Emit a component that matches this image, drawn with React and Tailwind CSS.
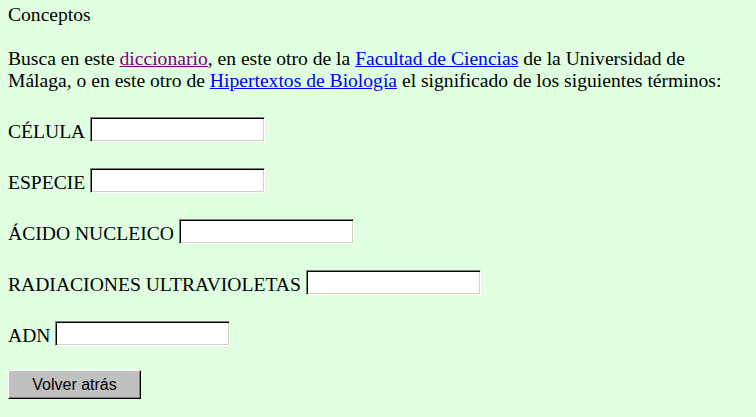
import React from 'react';

const TERMS = ['CÉLULA', 'ESPECIE', 'ÁCIDO NUCLEICO', 'RADIACIONES ULTRAVIOLETAS', 'ADN'];

function TermRow({ label }) {
  return (
    <div className="flex items-end gap-[5px] h-[25px]">
      <span className="leading-[22px] mb-[-1px] whitespace-nowrap">{label}</span>
      <input
        type="text"
        className="w-[175px] h-[25px] bg-white border border-t-[#808080] border-l-[#808080] border-r-white border-b-white shadow-[inset_1px_1px_0_#000,inset_-1px_-1px_0_#d4d0c8] outline-none px-1"
      />
    </div>
  );
}

export default function App() {
  return (
    <div className="min-h-[417px] bg-[#e0ffe0] text-black font-['Liberation_Serif','Times_New_Roman',serif] text-[19.6px] leading-[22px] px-[8px] pt-[4px]">
      <div>Conceptos</div>

      {/* the reference breaks the line after "Universidad de" */}
      <p className="mt-[22px] max-w-[740px]">
        Busca en este{' '}
        <a href="#" className="text-[#800080] underline">diccionario</a>, en este otro de la{' '}
        <a href="#" className="text-[#0000ff] underline">Facultad de Ciencias</a> de la Universidad de
        <br />
        Málaga, o en este otro de{' '}
        <a href="#" className="text-[#0000ff] underline">Hipertextos de Biología</a> el significado de los siguientes términos:
      </p>

      <div className="mt-[25px] flex flex-col gap-[26px]">
        {TERMS.map((t) => (
          <TermRow key={t} label={t} />
        ))}
      </div>

      <button className="mt-[24px] w-[133px] h-[29px] bg-[#c0c0c0] border border-t-white border-l-white border-r-black border-b-black shadow-[inset_-1px_-1px_0_#808080] font-['Liberation_Sans',Arial,sans-serif] text-[16px] leading-none text-black">
        Volver atrás
      </button>
    </div>
  );
}
